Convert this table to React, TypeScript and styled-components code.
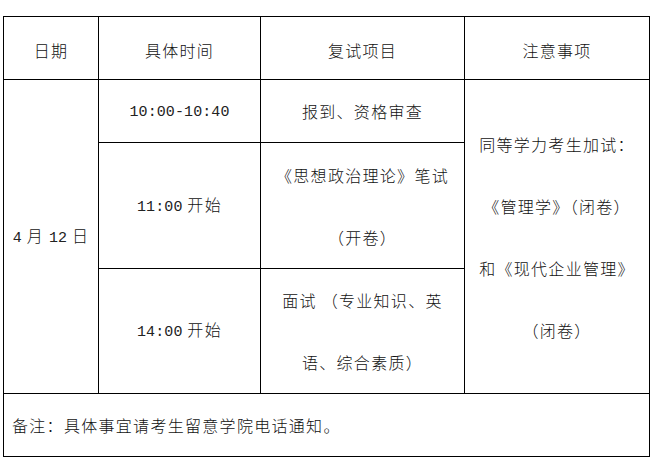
import styled, { createGlobalStyle } from 'styled-components';

const GlobalStyle = createGlobalStyle`
  html, body {
    margin: 0;
    padding: 0;
    background: #fff;
  }
  body {
    font-family: "Noto Sans CJK SC", "Liberation Serif", sans-serif;
    color: #111;
  }
`;

const Page = styled.div`
  width: 657px;
  height: 468px;
  padding: 16px 0 0 3px;
  box-sizing: border-box;
`;

const Table = styled.table`
  width: 647px;
  border-collapse: collapse;
  table-layout: fixed;
  font-size: 16px;
  letter-spacing: 1.3px;
  font-weight: 300;
`;

const Row = styled.tr<{ $h: number }>`
  height: ${({ $h }) => $h}px;
`;

const Cell = styled.td<{ $align?: 'left' | 'center' }>`
  border: 1px solid #000;
  padding: 0;
  text-align: ${({ $align }) => $align ?? 'center'};
  vertical-align: middle;
  line-height: 20px;
  white-space: nowrap;
`;

const HeadCell = styled(Cell)`
  padding-top: 4px;
`;

const NoteCell = styled(Cell)`
  padding-left: 8px;
`;

const Num = styled.span`
  font-family: "Liberation Mono", monospace;
  font-size: 15px;
  letter-spacing: 0.1px;
  font-weight: 400;
  color: #222;
`;

const Line = styled.div`
  line-height: 62px;
`;

export default function App() {
  return (
    <Page>
      <GlobalStyle />
      <Table>
        <colgroup>
          <col style={{ width: 95 }} />
          <col style={{ width: 162 }} />
          <col style={{ width: 204 }} />
          <col style={{ width: 185 }} />
        </colgroup>
        <tbody>
          <Row $h={63}>
            <HeadCell>日期</HeadCell>
            <HeadCell>具体时间</HeadCell>
            <HeadCell>复试项目</HeadCell>
            <HeadCell>注意事项</HeadCell>
          </Row>
          <Row $h={63}>
            <Cell rowSpan={3}>
              <Num>4</Num> 月 <Num>12</Num> 日
            </Cell>
            <Cell>
              <Num>10:00-10:40</Num>
            </Cell>
            <Cell>报到、资格审查</Cell>
            <Cell rowSpan={3}>
              <Line>同等学力考生加试：</Line>
              <Line>《管理学》（闭卷）</Line>
              <Line>和《现代企业管理》</Line>
              <Line>（闭卷）</Line>
            </Cell>
          </Row>
          <Row $h={126}>
            <Cell>
              <Num>11:00</Num> 开始
            </Cell>
            <Cell>
              <Line>《思想政治理论》笔试</Line>
              <Line>（开卷）</Line>
            </Cell>
          </Row>
          <Row $h={125}>
            <Cell>
              <Num>14:00</Num> 开始
            </Cell>
            <Cell>
              <Line>面试 （专业知识、英</Line>
              <Line>语、综合素质）</Line>
            </Cell>
          </Row>
          <Row $h={63}>
            <NoteCell colSpan={4} $align="left">
              备注：具体事宜请考生留意学院电话通知。
            </NoteCell>
          </Row>
        </tbody>
      </Table>
    </Page>
  );
}
